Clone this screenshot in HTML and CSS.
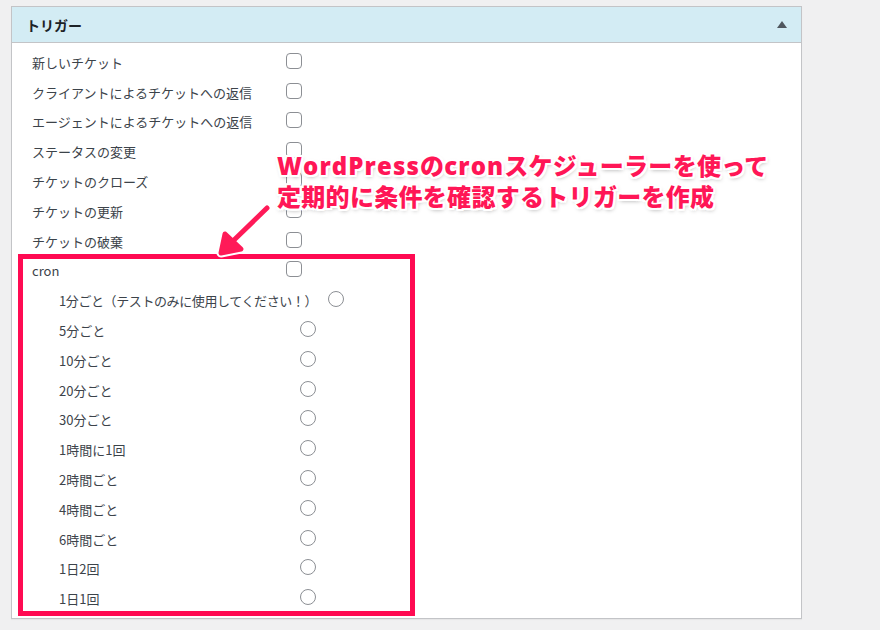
FILE: index.html
```html
<!DOCTYPE html>
<html lang="ja">
<head>
<meta charset="utf-8">
<link rel="stylesheet" href="styles.css">
</head>
<body>
<div class="panel">
  <div class="panel-head">
    <h2 class="panel-title">トリガー</h2>
    <span class="toggle"></span>
  </div>
  <div class="panel-body">
    <div class="row"><span class="label">新しいチケット</span><span class="checkbox"></span></div>
    <div class="row"><span class="label">クライアントによるチケットへの返信</span><span class="checkbox"></span></div>
    <div class="row"><span class="label">エージェントによるチケットへの返信</span><span class="checkbox"></span></div>
    <div class="row"><span class="label">ステータスの変更</span><span class="checkbox"></span></div>
    <div class="row"><span class="label">チケットのクローズ</span><span class="checkbox"></span></div>
    <div class="row"><span class="label">チケットの更新</span><span class="checkbox"></span></div>
    <div class="row"><span class="label">チケットの破棄</span><span class="checkbox"></span></div>
    <div class="row"><span class="label">cron</span><span class="checkbox"></span></div>
    <div class="sub">
      <div class="row"><span class="label label-long">1分ごと（テストのみに使用してください！）</span><span class="radio"></span></div>
      <div class="row"><span class="label">5分ごと</span><span class="radio"></span></div>
      <div class="row"><span class="label">10分ごと</span><span class="radio"></span></div>
      <div class="row"><span class="label">20分ごと</span><span class="radio"></span></div>
      <div class="row"><span class="label">30分ごと</span><span class="radio"></span></div>
      <div class="row"><span class="label">1時間に1回</span><span class="radio"></span></div>
      <div class="row"><span class="label">2時間ごと</span><span class="radio"></span></div>
      <div class="row"><span class="label">4時間ごと</span><span class="radio"></span></div>
      <div class="row"><span class="label">6時間ごと</span><span class="radio"></span></div>
      <div class="row"><span class="label">1日2回</span><span class="radio"></span></div>
      <div class="row"><span class="label">1日1回</span><span class="radio"></span></div>
    </div>
  </div>
</div>

<div class="highlight"></div>
<svg class="arrow" width="880" height="630" viewBox="0 0 880 630">
  <g stroke="#ffffff" stroke-width="9" stroke-linecap="round" stroke-linejoin="round" fill="#ffffff">
    <line x1="267" y1="208" x2="233" y2="241"/>
    <polygon points="221,253 225,234 241,249"/>
  </g>
  <g stroke="#ff1a58" stroke-width="5" stroke-linecap="round" stroke-linejoin="round" fill="#ff1a58">
    <line x1="267" y1="208" x2="233" y2="241"/>
    <polygon points="221,253 225,234 241,249"/>
  </g>
</svg>
<div class="note">
  <div class="note-line"><span class="latin">WordPress</span>の<span class="latin">cron</span>スケジューラーを使って</div>
  <div class="note-line">定期的に条件を確認するトリガーを作成</div>
</div>
</body>
</html>
```

FILE: styles.css
```css
html, body {
  margin: 0;
  padding: 0;
}
body {
  background: #f0f0f1;
  width: 880px;
  height: 630px;
  overflow: hidden;
  position: relative;
  padding: 6px 0 0 11px;
  box-sizing: border-box;
  font-family: "Noto Sans CJK JP", "Noto Sans", sans-serif;
  font-size: 13px;
  color: #3c434a;
}
.panel {
  width: 791px;
  height: 613px;
  box-sizing: border-box;
  background: #ffffff;
  border: 1px solid #c3c4c7;
  box-shadow: 0 1px 1px rgba(0,0,0,0.04);
}
.panel-head {
  height: 36px;
  box-sizing: border-box;
  background: #d3ecf4;
  border-bottom: 1px solid #c3c4c7;
  display: flex;
  align-items: center;
  justify-content: space-between;
  padding: 0 14px 0 14px;
}
.panel-title {
  margin: 0;
  font-size: 14px;
  font-weight: 700;
  color: #1d2327;
  line-height: 1;
  padding-top: 1px;
}
.toggle {
  width: 0;
  height: 0;
  border-left: 5px solid transparent;
  border-right: 5px solid transparent;
  border-bottom: 7px solid #50575e;
}
.panel-body {
  padding: 3px 0 0 20px;
}
.row {
  height: 29.8px;
  display: flex;
  align-items: center;
}
.label {
  min-width: 243px;
  margin-right: 11px;
  line-height: 1;
  padding-top: 3px;
  white-space: nowrap;
}
.sub {
  padding-left: 27px;
}
.sub .label {
  min-width: 230px;
}
.sub .label-long {
  letter-spacing: -0.4px;
}
.checkbox {
  width: 16px;
  height: 16px;
  box-sizing: border-box;
  border: 1px solid #8c8f94;
  border-radius: 4px;
  background: #fff;
}
.radio {
  width: 16px;
  height: 16px;
  box-sizing: border-box;
  border: 1px solid #8c8f94;
  border-radius: 50%;
  background: #fff;
}
.highlight {
  position: absolute;
  left: 18px;
  top: 254px;
  width: 397px;
  height: 362px;
  box-sizing: border-box;
  border: 5px solid #ff0a52;
}
.arrow {
  position: absolute;
  left: 0;
  top: 0;
}
.note {
  position: absolute;
  left: 277px;
  top: 150px;
  font-family: "Open Sans", "Noto Sans CJK JP", sans-serif;
  font-weight: 900;
  font-size: 24px;
  line-height: 31px;
  color: #ff1656;
  white-space: nowrap;
  letter-spacing: 0.3px;
  text-shadow:
    2px 0 0 #fff, -2px 0 0 #fff, 0 2px 0 #fff, 0 -2px 0 #fff,
    2px 2px 0 #fff, -2px -2px 0 #fff, 2px -2px 0 #fff, -2px 2px 0 #fff,
    1px 2px 4px rgba(0,0,0,0.35);
}
.latin {
  letter-spacing: 1.1px;
}
```
